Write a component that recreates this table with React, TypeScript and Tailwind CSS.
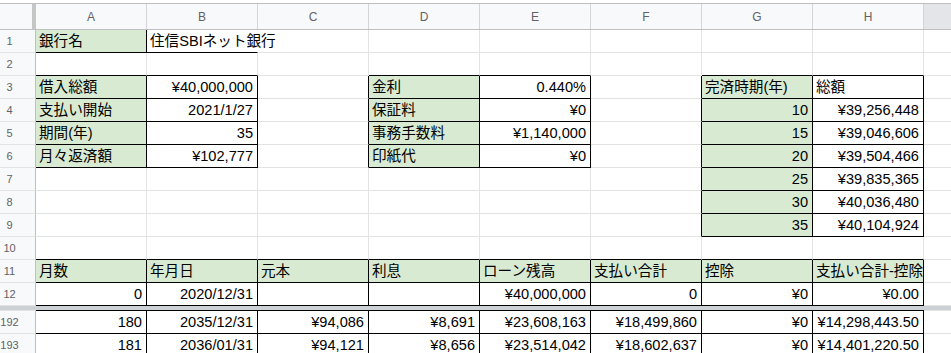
import React from "react";

type Cell = { t?: string; r?: boolean; g?: boolean; b?: boolean; o?: boolean };
type Row = { n: string; cells: Cell[]; top?: boolean };

// helpers for boxed cells
const L = (t: string, g = false): Cell => ({ t, g, b: true });
const R = (t: string, g = false): Cell => ({ t, r: true, g, b: true });
const _: Cell = {};

const COLS = ["A", "B", "C", "D", "E", "F", "G", "H"];

const rows: Row[] = [
  { n: "1", cells: [L("銀行名", true), { t: "住信SBIネット銀行", b: true, o: true }, _, _, _, _, _, _] },
  { n: "2", cells: [_, _, _, _, _, _, _, _] },
  { n: "3", cells: [L("借入総額", true), R("¥40,000,000"), _, L("金利", true), R("0.440%"), _, L("完済時期(年)", true), L("総額")] },
  { n: "4", cells: [L("支払い開始", true), R("2021/1/27"), _, L("保証料", true), R("¥0"), _, R("10", true), R("¥39,256,448")] },
  { n: "5", cells: [L("期間(年)", true), R("35"), _, L("事務手数料", true), R("¥1,140,000"), _, R("15", true), R("¥39,046,606")] },
  { n: "6", cells: [L("月々返済額", true), R("¥102,777"), _, L("印紙代", true), R("¥0"), _, R("20", true), R("¥39,504,466")] },
  { n: "7", cells: [_, _, _, _, _, _, R("25", true), R("¥39,835,365")] },
  { n: "8", cells: [_, _, _, _, _, _, R("30", true), R("¥40,036,480")] },
  { n: "9", cells: [_, _, _, _, _, _, R("35", true), R("¥40,104,924")] },
  { n: "10", cells: [_, _, _, _, _, _, _, _] },
  {
    n: "11",
    cells: [
      L("月数", true),
      L("年月日", true),
      L("元本", true),
      L("利息", true),
      L("ローン残高", true),
      L("支払い合計", true),
      L("控除", true),
      L("支払い合計-控除", true),
    ],
  },
  { n: "12", cells: [R("0"), R("2020/12/31"), R(""), R(""), R("¥40,000,000"), R("0"), R("¥0"), R("¥0.00")] },
  {
    n: "192",
    top: true,
    cells: [R("180"), R("2035/12/31"), R("¥94,086"), R("¥8,691"), R("¥23,608,163"), R("¥18,499,860"), R("¥0"), R("¥14,298,443.50")],
  },
  {
    n: "193",
    cells: [R("181"), R("2036/01/31"), R("¥94,121"), R("¥8,656"), R("¥23,514,042"), R("¥18,602,637"), R("¥0"), R("¥14,401,220.50")],
  },
];

const boxed = (ri: number, ci: number) => !!rows[ri]?.cells[ci]?.b;

function DataRow({ row, ri }: { row: Row; ri: number }) {
  return (
    <div className={row.top ? "flex h-[24px]" : "flex h-[23px]"}>
      {/* row number */}
      <div
        className={
          row.top
            ? "flex h-full w-[36px] shrink-0 items-center border-t border-r border-b border-t-[#e2e3e3] border-r-[#c0c0c0] border-b-[#e2e3e3] bg-[#f8f9fa]"
            : "flex h-full w-[36px] shrink-0 items-center border-r border-b border-r-[#c0c0c0] border-b-[#e2e3e3] bg-[#f8f9fa]"
        }
      >
        <span className="w-[19px] text-center text-[11px] text-[#5f6368]">{row.n}</span>
      </div>

      {row.cells.map((c, ci) => {
        const right = c.o ? "border-r-transparent" : boxed(ri, ci) || boxed(ri, ci + 1) ? "border-r-black" : "border-r-[#e2e3e3]";
        const bottom = boxed(ri, ci) || boxed(ri + 1, ci) ? "border-b-black" : "border-b-[#e2e3e3]";
        const top = row.top ? (boxed(ri, ci) ? "border-t border-t-black" : "border-t border-t-[#e2e3e3]") : "";
        return (
          <div
            key={ci}
            className={clsx(
              "flex h-full w-[111px] shrink-0 items-end whitespace-nowrap border-r border-b pb-[2px] pl-[3px] pr-[4px] leading-[17px] text-black",
              right,
              bottom,
              top,
              c.g && "bg-[#d9ead3]",
              c.r && "justify-end",
              !c.o && "overflow-hidden"
            )}
          >
            {c.t}
          </div>
        );
      })}

      <div
        className={
          row.top
            ? "h-full flex-1 border-t border-b border-t-[#e2e3e3] border-b-[#e2e3e3]"
            : "h-full flex-1 border-b border-b-[#e2e3e3]"
        }
      />
    </div>
  );
}

function clsx(...xs: (string | false | undefined)[]) {
  return xs.filter(Boolean).join(" ");
}

export default function App() {
  return (
    <div
      className="h-[353px] w-[951px] overflow-hidden bg-white text-[14.6px]"
      style={{ fontFamily: '"Liberation Sans", "Noto Sans CJK JP", sans-serif' }}
    >
      <div className="h-[3px]" />

      {/* column headers */}
      <div className="flex h-[27px] border-y border-[#c0c0c0]">
        <div className="h-full w-[36px] shrink-0 border-r-4 border-r-[#c4c7c5] bg-[#f8f9fa]" />
        {COLS.map((col) => (
          <div
            key={col}
            className="flex h-full w-[111px] shrink-0 items-center justify-center border-r border-r-[#d3d5d8] bg-[#f8f9fa] text-[12px] text-[#5f6368]"
          >
            {col}
          </div>
        ))}
        <div className="h-full flex-1 bg-[#e3e5e8]" />
      </div>

      {rows.map((row, ri) => (
        <React.Fragment key={row.n}>
          <DataRow row={row} ri={ri} />
          {row.n === "12" && <div className="h-[4px] bg-[#cdd1d6]" />}
        </React.Fragment>
      ))}
    </div>
  );
}
